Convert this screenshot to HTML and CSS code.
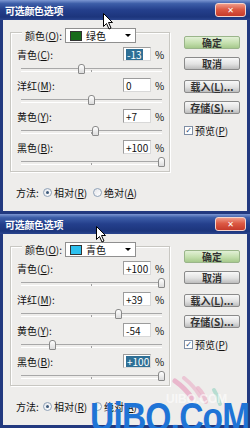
FILE: index.html
```html
<!DOCTYPE html>
<html lang="zh">

<head>
    <meta charset="utf-8">
    <meta name="viewport" content="width=device-width, initial-scale=1.0">
    <title>可选颜色选项</title>
    <link rel="stylesheet" href="styles.css">
</head>

<body>
    <div class="dialog">
        <div class="titlebar">
            <span class="title">可选颜色选项</span>
            <span class="close">&#x2715;</span>
        </div>
        <div class="body">
            <div class="left">
                <div class="group">
                    <div class="legend">
                        <span class="legend-label">颜色(<u>O</u>):</span>
                        <div class="select"><span class="swatch green"></span><span class="select-text">绿色</span><span class="caret"></span></div>
                    </div>
                    <div class="row first">
                        <div class="line"><span class="label">青色(<u>C</u>):</span><span class="field"><span class="sel">-13</span></span><span class="pct">%</span></div>
                        <div class="slider"><span class="tick"></span><span class="thumb" style="left: 43.5%"></span></div>
                    </div>
                    <div class="row">
                        <div class="line"><span class="label">洋红(<u>M</u>):</span><span class="field">0</span><span class="pct">%</span></div>
                        <div class="slider"><span class="tick"></span><span class="thumb" style="left: 50%"></span></div>
                    </div>
                    <div class="row">
                        <div class="line"><span class="label">黄色(<u>Y</u>):</span><span class="field">+7</span><span class="pct">%</span></div>
                        <div class="slider"><span class="tick"></span><span class="thumb" style="left: 53.5%"></span></div>
                    </div>
                    <div class="row">
                        <div class="line"><span class="label">黑色(<u>B</u>):</span><span class="field">+100</span><span class="pct">%</span></div>
                        <div class="slider"><span class="tick"></span><span class="thumb" style="left: 100%"></span></div>
                    </div>
                </div>
                <div class="method">
                    <span class="method-label">方法:</span>
                    <span class="radio on"></span><span class="radio-text">相对(<u>R</u>)</span>
                    <span class="radio"></span><span class="radio-text">绝对(<u>A</u>)</span>
                </div>
            </div>
            <div class="buttons">
                <div class="btn ok">确定</div>
                <div class="btn">取消</div>
                <div class="btn gap">载入(<u>L</u>)...</div>
                <div class="btn">存储(<u>S</u>)...</div>
                <div class="check"><span class="box">&#x2713;</span><span>预览(<u>P</u>)</span></div>
            </div>
        </div>
    </div>

    <div class="dialog">
        <div class="titlebar">
            <span class="title">可选颜色选项</span>
            <span class="close">&#x2715;</span>
        </div>
        <div class="body">
            <div class="left">
                <div class="group">
                    <div class="legend">
                        <span class="legend-label">颜色(<u>O</u>):</span>
                        <div class="select"><span class="swatch cyan"></span><span class="select-text">青色</span><span class="caret"></span></div>
                    </div>
                    <div class="row first">
                        <div class="line"><span class="label">青色(<u>C</u>):</span><span class="field">+100</span><span class="pct">%</span></div>
                        <div class="slider"><span class="tick"></span><span class="thumb" style="left: 100%"></span></div>
                    </div>
                    <div class="row">
                        <div class="line"><span class="label">洋红(<u>M</u>):</span><span class="field">+39</span><span class="pct">%</span></div>
                        <div class="slider"><span class="tick"></span><span class="thumb" style="left: 69.5%"></span></div>
                    </div>
                    <div class="row">
                        <div class="line"><span class="label">黄色(<u>Y</u>):</span><span class="field">-54</span><span class="pct">%</span></div>
                        <div class="slider"><span class="tick"></span><span class="thumb" style="left: 23%"></span></div>
                    </div>
                    <div class="row">
                        <div class="line"><span class="label">黑色(<u>B</u>):</span><span class="field"><span class="sel">+100</span></span><span class="pct">%</span></div>
                        <div class="slider"><span class="tick"></span><span class="thumb" style="left: 100%"></span></div>
                    </div>
                </div>
                <div class="method">
                    <span class="method-label">方法:</span>
                    <span class="radio on"></span><span class="radio-text">相对(<u>R</u>)</span>
                    <span class="radio"></span><span class="radio-text">绝对(<u>A</u>)</span>
                </div>
            </div>
            <div class="buttons">
                <div class="btn ok">确定</div>
                <div class="btn">取消</div>
                <div class="btn gap">载入(<u>L</u>)...</div>
                <div class="btn">存储(<u>S</u>)...</div>
                <div class="check"><span class="box">&#x2713;</span><span>预览(<u>P</u>)</span></div>
            </div>
        </div>
    </div>

    <!-- mouse pointers -->
    <svg class="cursor c1" width="11" height="17" viewBox="0 0 11 17"><path d="M0.5 0.5 L0.5 13.5 L3.5 10.5 L6 16 L8 15 L5.5 9.5 L9.5 9.5 Z" fill="#fff" stroke="#000" stroke-width="1"/></svg>
    <svg class="cursor c2" width="11" height="17" viewBox="0 0 11 17"><path d="M0.5 0.5 L0.5 13.5 L3.5 10.5 L6 16 L8 15 L5.5 9.5 L9.5 9.5 Z" fill="#fff" stroke="#000" stroke-width="1"/></svg>

    <!-- watermark -->
    <svg class="logo" width="70" height="45" viewBox="0 0 70 45">
        <path d="M5 5 Q15 12 22 22" stroke="#e7a9c4" stroke-width="5" fill="none" stroke-linecap="round" opacity="0.8"/>
        <path d="M14 2 Q24 10 30 20" stroke="#eab6cc" stroke-width="4" fill="none" stroke-linecap="round" opacity="0.7"/>
        <path d="M28 12 Q34 18 36 26" stroke="#e9b0c8" stroke-width="4" fill="none" stroke-linecap="round" opacity="0.7"/>
        <path d="M44 14 Q48 20 50 28" stroke="#9fd6c6" stroke-width="4" fill="none" stroke-linecap="round" opacity="0.7"/>
    </svg>
    <div class="watermark-faint">UIBQ.COM</div>
    <div class="watermark">UiBQ.CoM</div>
</body>

</html>
```

FILE: styles.css
```css
* {
    box-sizing: border-box;
}

body {
    margin: 0;
    width: 250px;
    height: 428px;
    overflow: hidden;
    position: relative;
    font-family: "Noto Sans CJK SC", "Liberation Sans", sans-serif;
    font-size: 10px;
    color: #111;
    background: #22397f;
}

u {
    text-decoration-thickness: 1px;
    text-underline-offset: 1px;
}

/* window frame */

.dialog {
    height: 214px;
    display: flex;
    flex-direction: column;
}

.titlebar {
    height: 20px;
    display: flex;
    align-items: center;
    justify-content: space-between;
    padding: 0 4px 0 5px;
    background: linear-gradient(to bottom, #7c97d2 0%, #3d5ea8 18%, #243f8c 50%, #1c357c 85%, #2a458e 100%);
}

.title {
    color: #fff;
    font-weight: bold;
    font-size: 10px;
    letter-spacing: -0.3px;
}

.close {
    width: 31px;
    height: 14px;
    border: 1px solid #f4d4cc;
    border-radius: 3px;
    background: linear-gradient(to bottom, #f09a88 0%, #dc5a44 45%, #c63a2a 100%);
    color: #fff;
    font-family: "DejaVu Sans", sans-serif;
    font-size: 8px;
    font-weight: bold;
    display: flex;
    align-items: center;
    justify-content: center;
}

.body {
    flex: 1;
    display: flex;
    border: 3px solid #22397f;
    border-top: 0;
    background: #eeedeb;
}

/* left part */

.left {
    margin-left: 7px;
    padding-top: 12px;
}

.group {
    width: 160px;
    height: 140px;
    border: 1px solid #c8c7c2;
    box-shadow: inset 1px 1px 0 #fff, 1px 1px 0 #fff;
}

.legend {
    display: flex;
    align-items: center;
    height: 15px;
    margin: -5px 0 0 11px;
}

.legend-label {
    width: 43px;
    padding-left: 3px;
    background: #eeedeb;
}

.select {
    width: 71px;
    height: 15px;
    display: flex;
    align-items: center;
    border: 1px solid #8f8f8f;
    background: #fff;
    position: relative;
}

.swatch {
    width: 12px;
    height: 10px;
    margin-left: 4px;
    border: 1px solid #333;
}

.green {
    background: #176b1b;
}

.cyan {
    background: #2cc0ee;
}

.select-text {
    margin-left: 4px;
}

.caret {
    margin-left: auto;
    margin-right: 4px;
    border-left: 3px solid transparent;
    border-right: 3px solid transparent;
    border-top: 3px solid #000;
}

.row {
    height: 31px;
}

.row.first {
    margin-top: 4px;
}

.line {
    display: flex;
    align-items: center;
    height: 14px;
    padding-left: 6px;
}

.label {
    width: 106px;
}

.field {
    width: 28px;
    height: 14px;
    display: flex;
    align-items: center;
    padding-left: 2px;
    border: 1px solid #9c9c9c;
    border-right-color: #d8d8d8;
    border-bottom-color: #d8d8d8;
    background: #fff;
}

.sel {
    background: #2e6f95;
    color: #fff;
    padding: 0 1px;
    line-height: 11px;
}

.pct {
    margin-left: 4px;
}

.slider {
    position: relative;
    height: 17px;
    width: 141px;
    margin-left: 10px;
}

.slider::before {
    content: "";
    position: absolute;
    left: 0;
    right: 0;
    top: 7px;
    height: 2px;
    border-top: 1px solid #a8a8a8;
    border-bottom: 1px solid #fff;
}

.tick {
    position: absolute;
    left: 70px;
    top: 9px;
    width: 1px;
    height: 2px;
    background: #a0a0a0;
}

.thumb {
    position: absolute;
    top: 3px;
    width: 7px;
    height: 10px;
    margin-left: -4px;
    border: 1px solid #8a8a8a;
    border-radius: 3px 3px 1px 1px;
    background: linear-gradient(to bottom, #fff, #dcdcdc);
}

.method {
    display: flex;
    align-items: center;
    height: 14px;
    margin: 13px 0 0 6px;
}

.method-label {
    width: 27px;
}

.radio {
    width: 9px;
    height: 9px;
    border-radius: 50%;
    border: 1px solid #8fa2b8;
    background: linear-gradient(135deg, #e4e6ea, #fff);
    position: relative;
}

.radio.on::after {
    content: "";
    position: absolute;
    left: 2px;
    top: 2px;
    width: 3px;
    height: 3px;
    border-radius: 50%;
    background: #3d5a7a;
}

.radio-text {
    width: 39px;
    margin-left: 2px;
}

/* buttons */

.buttons {
    width: 56px;
    margin-left: 14px;
    padding-top: 16px;
    display: flex;
    flex-direction: column;
}

.btn {
    height: 13px;
    margin-top: 8px;
    display: flex;
    align-items: center;
    justify-content: center;
    border: 1px solid #8a8a8a;
    border-radius: 2px;
    background: linear-gradient(to bottom, #f8f8f8 0%, #e2e2e2 55%, #bdbdbd 100%);
    font-weight: bold;
    color: #333;
}

.btn.ok {
    margin-top: 0;
    border-color: #9ab58a;
    background: linear-gradient(to bottom, #e2f0d6 0%, #c4dfae 55%, #a6c98c 100%);
}

.btn.gap {
    margin-top: 10px;
}

.check {
    display: flex;
    align-items: center;
    margin-top: 9px;
}

.box {
    width: 9px;
    height: 9px;
    margin-right: 2px;
    border: 1px solid #7f8ea4;
    background: #fff;
    color: #2c4a78;
    font-family: "DejaVu Sans", sans-serif;
    font-size: 8px;
    line-height: 7px;
    text-align: center;
}

/* overlays */

.cursor {
    position: absolute;
}

.c1 {
    left: 103px;
    top: 13px;
}

.c2 {
    left: 96px;
    top: 226px;
}

.logo {
    position: absolute;
    left: 170px;
    top: 376px;
}

.watermark-faint {
    position: absolute;
    left: 166px;
    top: 392px;
    font-family: "Liberation Sans", sans-serif;
    font-size: 12px;
    font-weight: bold;
    color: rgba(255, 255, 255, 0.6);
}

.watermark {
    position: absolute;
    left: 90px;
    top: 397px;
    font-family: "Liberation Sans", sans-serif;
    font-size: 40px;
    font-weight: bold;
    line-height: 40px;
    letter-spacing: -1px;
    color: #1f74d6;
    white-space: nowrap;
    transform: scaleX(0.84);
    transform-origin: left top;
}
```
